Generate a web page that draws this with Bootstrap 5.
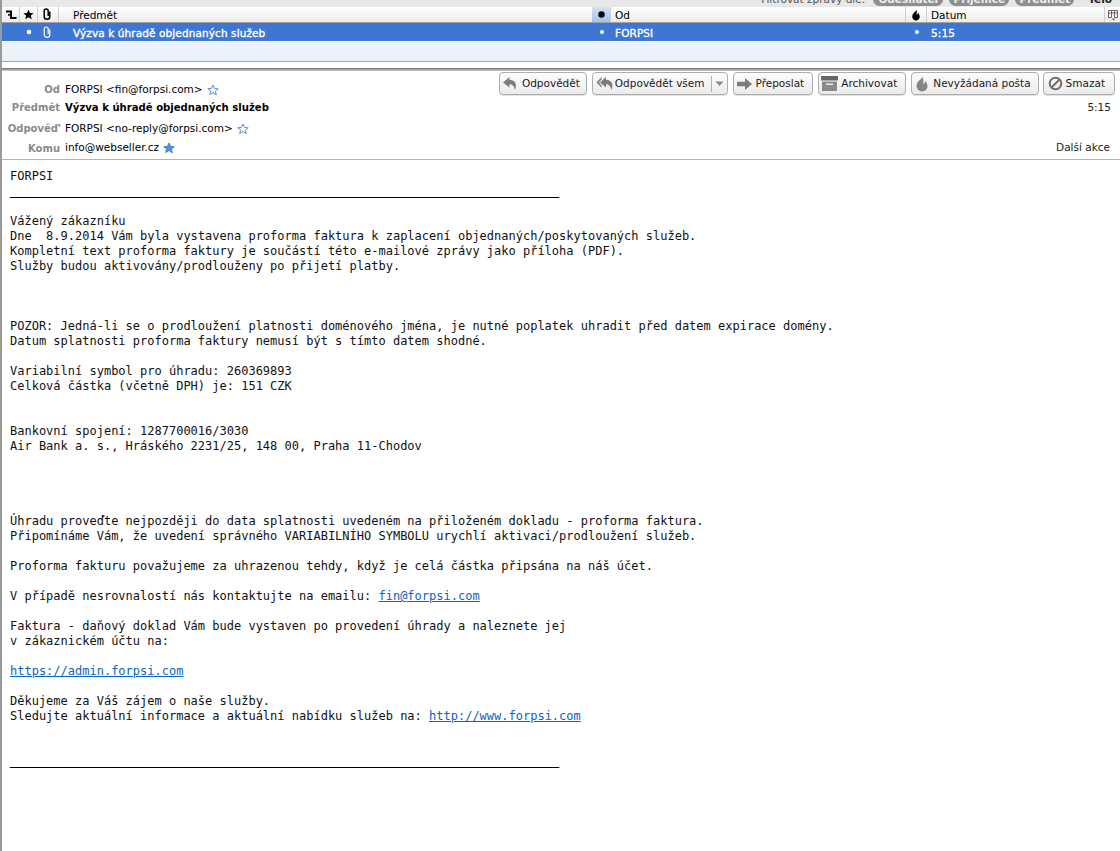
<!DOCTYPE html>
<html lang="cs">
<head>
<meta charset="utf-8">
<title>Výzva k úhradě objednaných služeb</title>
<link href="https://cdn.jsdelivr.net/npm/bootstrap@5.3.0/dist/css/bootstrap.min.css" rel="stylesheet">
<style>
html,body{height:851px;overflow:hidden}
body{background:#fff;color:#000;font-family:"DejaVu Sans",sans-serif;font-size:10.5px;border-left:2px solid #9a9a9a}
.filter-strip{height:7px;background:#e8e8e8;overflow:hidden;padding-right:8px;font-size:10.5px;line-height:13px;color:#555}
.filter-text{margin-right:8px;margin-bottom:1px}
.filter-pill{background:#8f8f8f;color:#eee;border-radius:7px;height:13px;font-weight:700;text-align:center;margin-bottom:1px;overflow:hidden}
.pill-a{width:70px;margin-right:6px}
.pill-b{width:60px;margin-right:6px}
.pill-c{width:59px;margin-right:14px}
.filter-last{color:#222;font-weight:700;margin-bottom:1px}
.col-grid{display:grid;grid-template-columns:18px 18px 21px 14px 519px 19px 1fr 21px 178px 15px}
.col-head{height:16px;background:linear-gradient(#fff,#ececec);border-bottom:1px solid #a0a0a0;line-height:15px}
.col-head>div{display:flex;align-items:center;height:15px;overflow:hidden}
.head-txt{padding-top:1px}
.sep-right{border-right:1px solid #cfcfcf}
.active-col{background:linear-gradient(#d2e4f8,#9cc4ee)}
.row-sel{height:18px;background:#3d77d3;color:#fff;line-height:18px;-webkit-text-stroke:.35px #fff;letter-spacing:.1px}
.row-sel>div{display:flex;align-items:center;height:18px}
.row-sel>.sel-txt{padding-top:1px}
.row-tint{height:20px;background:#ebf2fc;border-bottom:1px solid #a8a8a8;margin-top:1px}
.white-gap{height:6px;background:#fff}
.splitter{height:3px;background:linear-gradient(#6f6f6f,#cfcfcf)}
.msg-head{height:89px;border-bottom:1px solid #b4b4b4;position:relative}
.hd-line{display:flex;align-items:center;white-space:nowrap}
.hd-1{height:28px;padding-top:9px}
.hd-2{height:17px}
.hd-3{height:23px;padding-top:2px}
.hd-4{height:18px}
.hd-label{width:58px;text-align:right;color:#8a8a8a;font-weight:700;font-size:10px;flex:none;margin-right:5px}
.hd-label.wide{width:59px;margin-right:4px}
.subject-strong{font-weight:700;font-size:10.1px}
.hd-end{margin-left:auto;padding-right:9px;color:#222}
.hd-end.more{padding-right:10px}
.star{margin-left:4px;flex:none}
.tool-row{position:absolute;top:1px;right:5px;display:flex;gap:5px}
.tool-btn{height:23px;padding:0 6px 0 2px;font-size:10.5px;line-height:21px;color:#222;border:1px solid #aeaeae;border-radius:4px;background:linear-gradient(#fcfcfc,#ebebeb);display:flex;align-items:center;gap:3px;white-space:nowrap;--bs-btn-hover-bg:#eee;box-shadow:0 1px 0 #e2e2e2}
.btn-all{padding-left:3px;padding-right:3px;gap:0}
.btn-all .split-sep{margin:0 3px 0 6px}
.btn-mid{padding-right:8px}
.btn-junk{padding-left:3px;padding-right:7px;gap:4px}
.btn-stop{padding-left:4px;padding-right:9px;margin-left:-1px}
.split-sep{width:1px;height:16px;background:#b0b0b0}
.mail-body{margin:9px 0 0 8px;font-family:"DejaVu Sans Mono",monospace;font-size:12px;line-height:15px;color:#111;white-space:pre}
.mail-body a{color:#0b63c5;text-decoration:underline}
.rule-chars{color:#000;-webkit-text-stroke:.3px #000}
</style>
</head>
<body>
<div class="filter-strip d-flex justify-content-end align-items-end">
  <span class="filter-text">Filtrovat zprávy dle:</span>
  <span class="filter-pill pill-a">Odesílatel</span>
  <span class="filter-pill pill-b">Příjemce</span>
  <span class="filter-pill pill-c">Předmět</span>
  <span class="filter-last">Tělo</span>
</div>

<div class="col-grid col-head">
  <div class="sep-right justify-content-center"><svg width="12" height="10" viewBox="0 0 12 10"><path d="M1 1.500H6V8H11.500" fill="none" stroke="#000" stroke-width="2"/><path d="M3 4.800H6" stroke="#000" stroke-width="1.600"/></svg></div>
  <div class="sep-right justify-content-center"><svg width="11" height="11" viewBox="0 0 11 11"><path d="M5.500 .5l1.500 3.400 3.600.3-2.700 2.400.8 3.600-3.200-1.900-3.200 1.900.8-3.600L.4 4.200l3.600-.3z"/></svg></div>
  <div class="sep-right ps-1"><svg width="10" height="13" viewBox="0 0 10 13"><path d="M7.800 3.500V8.500a2.800 2.800 0 0 1-5.600 0V3a2 2 0 0 1 4 0V8" fill="none" stroke="#000" stroke-width="1.500"/></svg></div>
  <div></div>
  <div class="head-txt">Předmět</div>
  <div class="active-col justify-content-center sep-right"><svg width="7" height="7" viewBox="0 0 7 7"><circle cx="3.500" cy="3.500" r="3.200"/></svg></div>
  <div class="ps-1 sep-right head-txt">Od</div>
  <div class="justify-content-center sep-right"><svg width="10" height="12" viewBox="0 0 10 12"><path d="M5 .5C5.500 2.500 2.800 3 1.500 6c-1 3 1.200 5.500 3.500 5.500S9.500 9 8.500 6.500C8 5 7.500 4.500 7.200 3.500 6.800 5 6 5.800 5.500 6.200 6 4 6.200 2 5 .5z"/></svg></div>
  <div class="ps-1 sep-right head-txt">Datum</div>
  <div class="justify-content-center"><svg width="12" height="12" viewBox="0 0 12 12" fill="none" stroke="#666"><path d="M1.500 1.500h9v7h-3M1.500 1.500v7h3M1.500 4h9M4.500 1.500v7M7.500 1.500v7"/><path d="M4.500 9.500h4l-2 2z" fill="#666" stroke="none"/></svg></div>
</div>

<div class="col-grid row-sel">
  <div></div>
  <div class="justify-content-center"><svg width="6" height="6" viewBox="0 0 6 6"><circle cx="3" cy="3" r="2.300" fill="#fff"/></svg></div>
  <div class="ps-1"><svg width="10" height="13" viewBox="0 0 10 13"><path d="M7.800 3.500V8.500a2.800 2.800 0 0 1-5.600 0V3a2 2 0 0 1 4 0V8" fill="none" stroke="#fff" stroke-width="1.200"/></svg></div>
  <div></div>
  <div class="sel-txt">Výzva k úhradě objednaných služeb</div>
  <div class="justify-content-center"><svg width="6" height="6" viewBox="0 0 6 6"><circle cx="3" cy="3" r="2" fill="#fff"/></svg></div>
  <div class="ps-1 sel-txt">FORPSI</div>
  <div class="justify-content-center"><svg width="6" height="6" viewBox="0 0 6 6"><circle cx="3" cy="3" r="2" fill="#fff"/></svg></div>
  <div class="ps-1 sel-txt">5:15</div>
  <div></div>
</div>
<div class="row-tint"></div>
<div class="white-gap"></div>
<div class="splitter"></div>

<div class="msg-head">
  <div class="hd-line hd-1"><span class="hd-label">Od</span><span>FORPSI &lt;fin@forpsi.com&gt;</span>
    <svg class="star" width="12" height="12" viewBox="0 0 12 12"><path d="M6 1l1.500 3.400 3.700.4-2.800 2.400.9 3.700L6 8.500 2.700 10.500l.9-3.700L.8 4.800l3.700-.4z" fill="#fff" stroke="#5b8fdc"/></svg></div>
  <div class="hd-line hd-2"><span class="hd-label">Předmět</span><span class="subject-strong">Výzva k úhradě objednaných služeb</span><span class="hd-end">5:15</span></div>
  <div class="hd-line hd-3"><span class="hd-label wide">Odpověď'</span><span>FORPSI &lt;no-reply@forpsi.com&gt;</span>
    <svg class="star" width="12" height="12" viewBox="0 0 12 12"><path d="M6 1l1.500 3.400 3.700.4-2.800 2.400.9 3.700L6 8.500 2.700 10.500l.9-3.700L.8 4.800l3.700-.4z" fill="#fff" stroke="#5b8fdc"/></svg></div>
  <div class="hd-line hd-4"><span class="hd-label">Komu</span><span>info@webseller.cz</span>
    <svg class="star" width="12" height="12" viewBox="0 0 12 12"><path d="M6 1l1.500 3.400 3.700.4-2.800 2.400.9 3.700L6 8.500 2.700 10.500l.9-3.700L.8 4.800l3.700-.4z" fill="#5b8fdc" stroke="#4a7fd0"/></svg><span class="hd-end more">Další akce</span></div>
  <div class="tool-row">
    <button class="btn tool-btn"><svg width="17" height="15" viewBox="0 0 17 15"><path d="M7.500 1L1 6.500 7.500 11.500V8.200c3 0 4.800 2 5.300 5.800 2.500-5.500.8-9.800-5.300-10.300z" fill="#7d7d7d"/></svg>Odpovědět</button>
    <button class="btn tool-btn btn-all"><svg width="19" height="15" viewBox="0 0 19 15"><path d="M5.500 1L.5 6.500 5.500 11.500V9.500L3 6.500 5.500 3.500zM10 1L4 6.500 10 11.500V8.200c3 0 4.800 2 5.300 5.800 2.500-5.500.8-9.800-5.300-10.300z" fill="#7d7d7d"/></svg>Odpovědět všem<span class="split-sep"></span><svg width="9" height="6" viewBox="0 0 9 6"><path d="M.5 .5h8L4.500 5z" fill="#8a8a8a"/></svg></button>
    <button class="btn tool-btn btn-mid"><svg width="17" height="14" viewBox="0 0 17 14"><path d="M1 4.800h8V1l7 6-7 6V9.200H1z" fill="#7d7d7d"/></svg>Přeposlat</button>
    <button class="btn tool-btn btn-mid"><svg width="17" height="15" viewBox="0 0 17 15"><path d="M0 0h17v4.500H0z" fill="#666"/><path d="M1 5.500h15V15H1z" fill="#8a8a8a"/><path d="M5 7.500h7v1.500H5z" fill="#eee"/></svg>Archivovat</button>
    <button class="btn tool-btn btn-junk"><svg width="14" height="16" viewBox="0 0 14 16"><path d="M7 .5C7.500 3 3.500 4.200 1.800 8c-1.400 3.800 2 7.500 5.200 7.500S13.600 12.200 12.200 8.500C11.600 6.800 11 6 10.600 4.800 10 6.800 8.800 7.700 8 8.200 8.600 5.500 8.800 2.500 7 .5z" fill="#858585"/></svg>Nevyžádaná pošta</button>
    <button class="btn tool-btn btn-stop"><svg width="15" height="15" viewBox="0 0 15 15" fill="none" stroke="#6f6f6f" stroke-width="2"><circle cx="7.500" cy="7.500" r="5.800"/><path d="M3.500 11.500l8-8"/></svg>Smazat</button>
  </div>
</div>

<div class="mail-body">FORPSI
<span class="rule-chars">____________________________________________________________________________</span>

Vážený zákazníku
Dne  8.9.2014 Vám byla vystavena proforma faktura k zaplacení objednaných/poskytovaných služeb.
Kompletní text proforma faktury je součástí této e-mailové zprávy jako příloha (PDF).
Služby budou aktivovány/prodlouženy po přijetí platby.



POZOR: Jedná-li se o prodloužení platnosti doménového jména, je nutné poplatek uhradit před datem expirace domény.
Datum splatnosti proforma faktury nemusí být s tímto datem shodné.

Variabilní symbol pro úhradu: 260369893
Celková částka (včetně DPH) je: 151 CZK


Bankovní spojení: 1287700016/3030
Air Bank a. s., Hráského 2231/25, 148 00, Praha 11-Chodov




Úhradu proveďte nejpozději do data splatnosti uvedeném na přiloženém dokladu - proforma faktura.
Připomínáme Vám, že uvedení správného VARIABILNÍHO SYMBOLU urychlí aktivaci/prodloužení služeb.

Proforma fakturu považujeme za uhrazenou tehdy, když je celá částka připsána na náš účet.

V případě nesrovnalostí nás kontaktujte na emailu: <a href="#">fin@forpsi.com</a>

Faktura - daňový doklad Vám bude vystaven po provedení úhrady a naleznete jej
v zákaznickém účtu na:

<a href="#">https://admin.forpsi.com</a>

Děkujeme za Váš zájem o naše služby.
Sledujte aktuální informace a aktuální nabídku služeb na: <a href="#">http://www.forpsi.com</a>


<span class="rule-chars">____________________________________________________________________________</span></div>
<script src="https://cdn.jsdelivr.net/npm/bootstrap@5.3.0/dist/js/bootstrap.bundle.min.js"></script>
</body>
</html>
